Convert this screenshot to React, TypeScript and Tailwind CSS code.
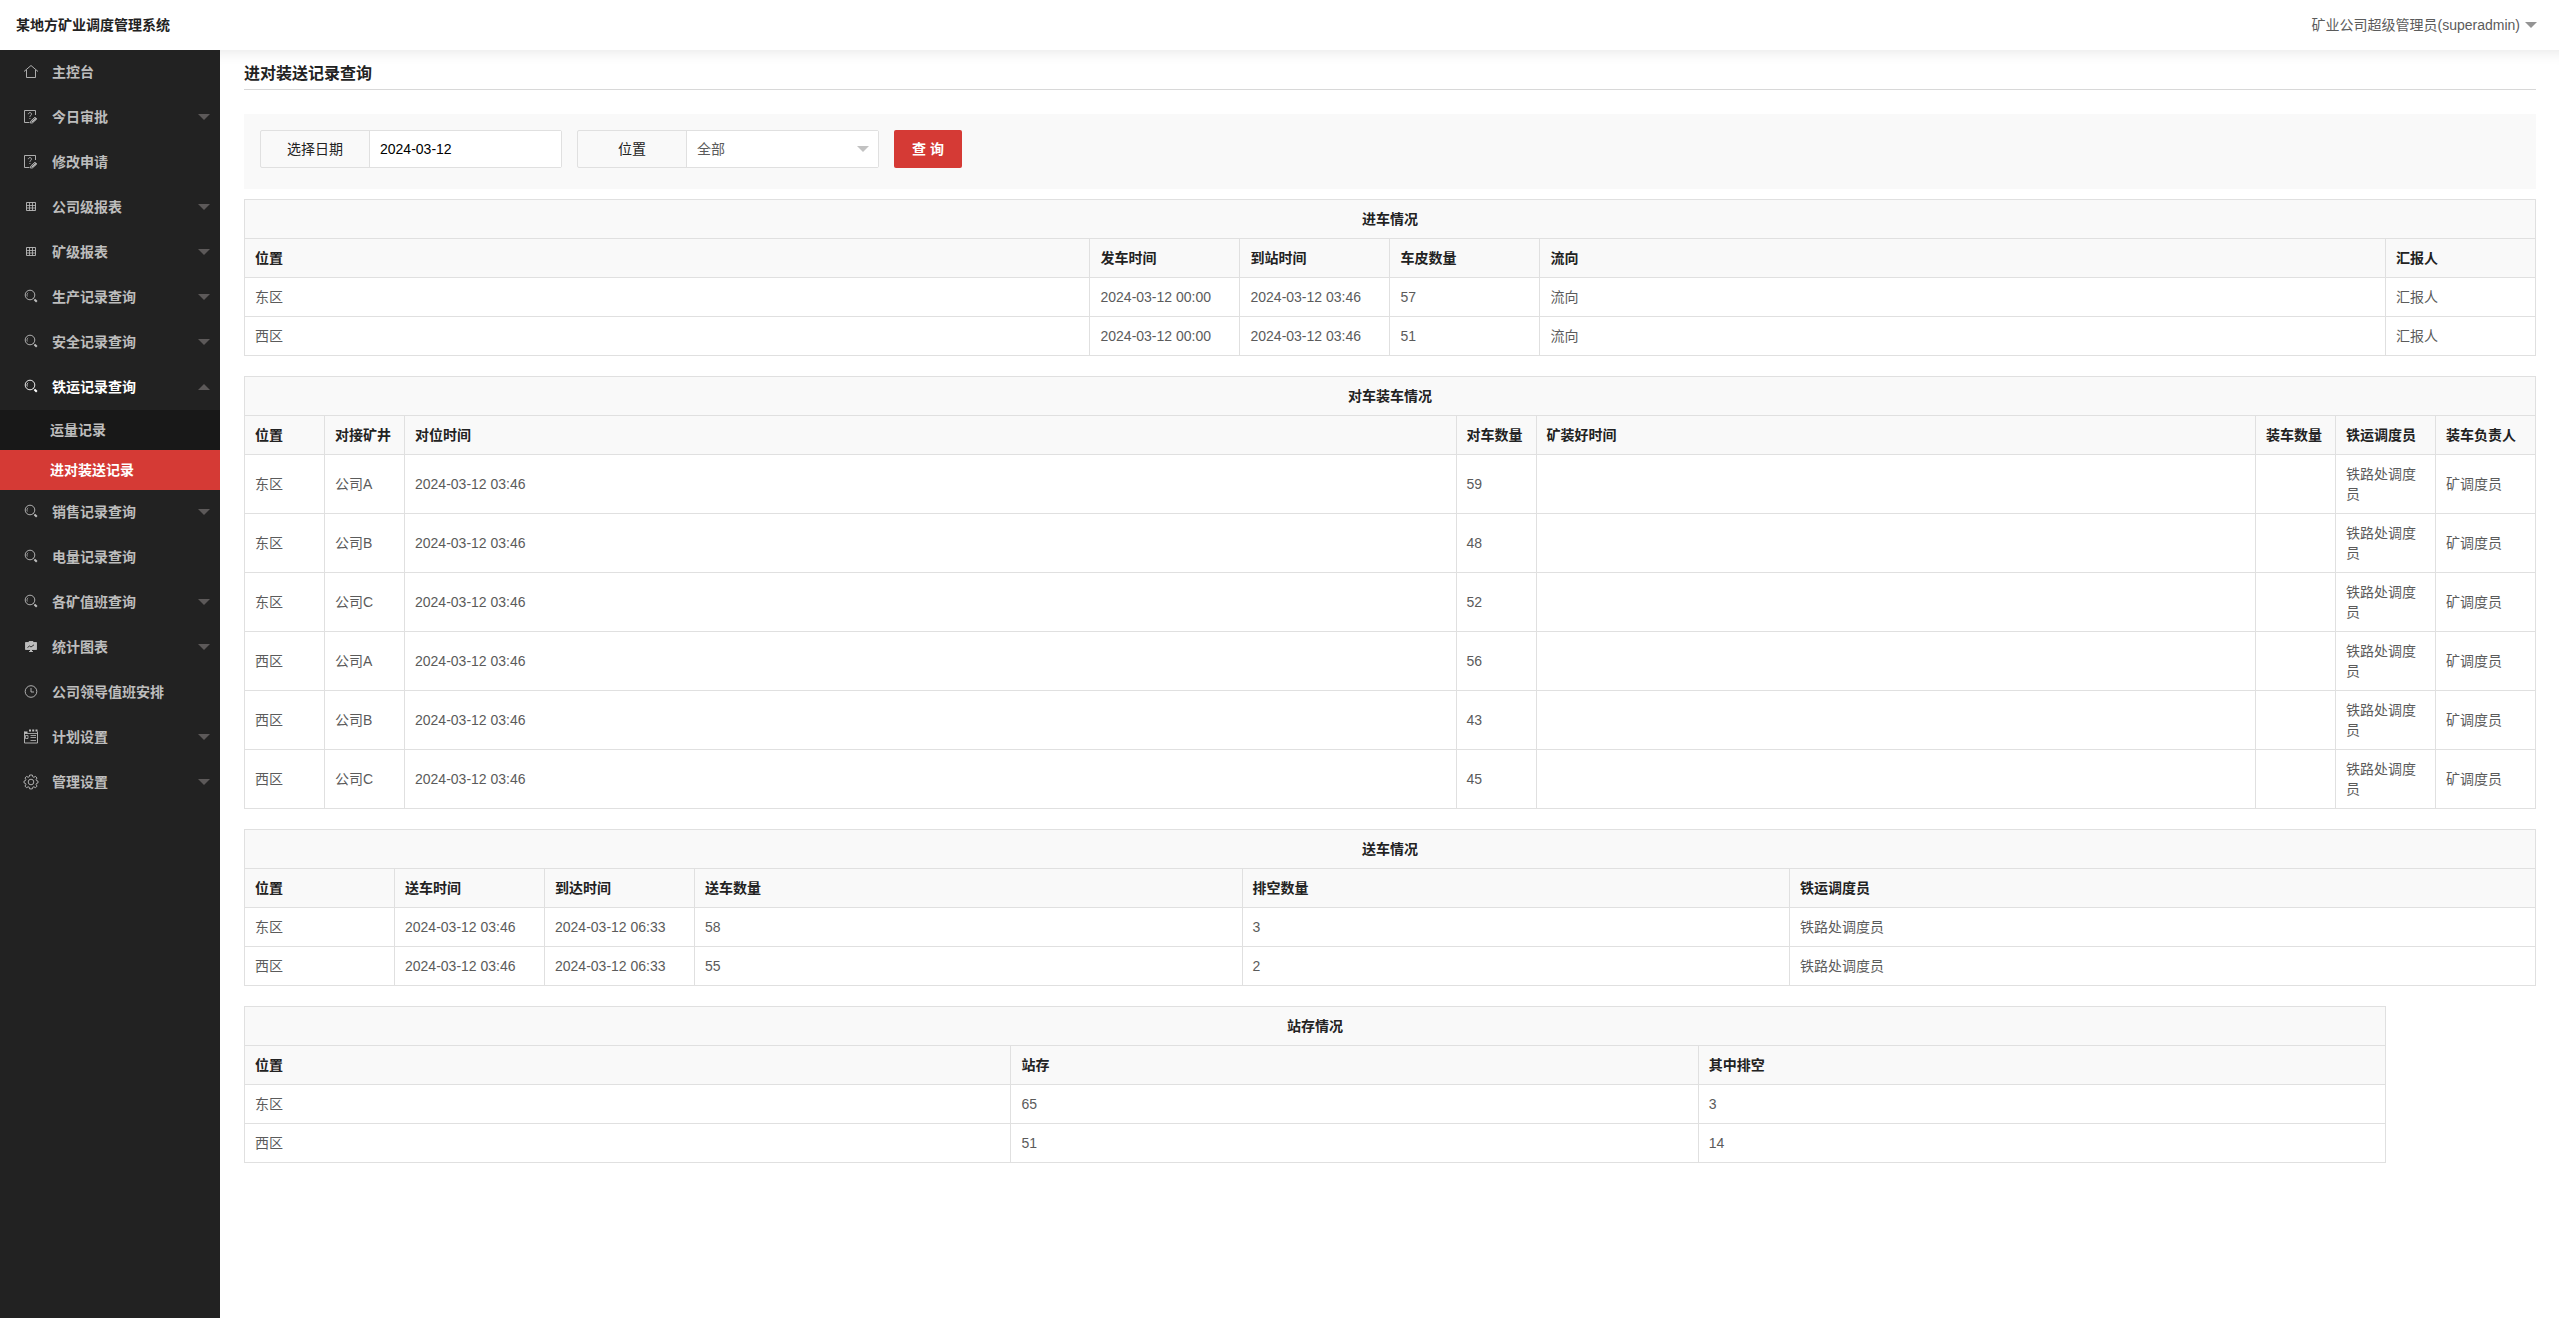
import type { ReactNode } from 'react';

type IconName = 'home' | 'survey' | 'grid' | 'search' | 'board' | 'clock' | 'form' | 'gear';

type NavItem = {
  label: string;
  icon: IconName;
  arrow?: boolean;
  children?: { label: string; active?: boolean }[];
};

const NAV: NavItem[] = [
  { label: '主控台', icon: 'home' },
  { label: '今日审批', icon: 'survey', arrow: true },
  { label: '修改申请', icon: 'survey' },
  { label: '公司级报表', icon: 'grid', arrow: true },
  { label: '矿级报表', icon: 'grid', arrow: true },
  { label: '生产记录查询', icon: 'search', arrow: true },
  { label: '安全记录查询', icon: 'search', arrow: true },
  {
    label: '铁运记录查询',
    icon: 'search',
    arrow: true,
    children: [{ label: '运量记录' }, { label: '进对装送记录', active: true }],
  },
  { label: '销售记录查询', icon: 'search', arrow: true },
  { label: '电量记录查询', icon: 'search' },
  { label: '各矿值班查询', icon: 'search', arrow: true },
  { label: '统计图表', icon: 'board', arrow: true },
  { label: '公司领导值班安排', icon: 'clock' },
  { label: '计划设置', icon: 'form', arrow: true },
  { label: '管理设置', icon: 'gear', arrow: true },
];

const ICONS: Record<IconName, ReactNode> = {
  home: (
    <>
      <path d="m1 7.5 7-6 7 6" />
      <path d="M3.500 6v7.500h9V6" />
    </>
  ),
  survey: (
    <>
      <path d="M6.500 13.500h-5v-12h11v4.500" />
      <path d="M5.300 5.200c0-2.200 3.400-2 3.200 0-.1 1.200-1.600 1.300-1.600 2.700M6.900 9v1" />
      <path d="m7.800 12 4.200-3.800 1.800 1.800-4.200 3.800-2 .3z" />
      <path d="m9 13 4-3.600" strokeWidth="1.5" />
    </>
  ),
  grid: (
    <>
      <path d="M3.500 3.500h9v8h-9z" />
      <path d="M3.500 6.500h9M3.500 9h9M6.500 3.500v8M9.500 3.500v8" strokeWidth="0.8" />
    </>
  ),
  search: (
    <>
      <circle cx="7" cy="6" r="4.800" />
      <path d="M4.300 7.500c-.6-1.500-.2-2.900.9-3.700" strokeWidth="0.8" />
      <path d="m10.400 9.400 1 1" />
      <path d="m11.500 10.500 2.300 2.300" strokeWidth="2" />
    </>
  ),
  board: (
    <>
      <path d="M2.500 3.500h11v7h-11zM6 2.500h4v1H6zM7.500 11h1v1.500h-1z" fill="currentColor" />
      <path d="M6 12.500h4" />
      <path d="m4.500 8.500 2-1.500 1.500 1 3-2.200" stroke="#222222" />
    </>
  ),
  clock: (
    <>
      <circle cx="8" cy="7.500" r="5.800" />
      <path d="M8 4v4h3" />
    </>
  ),
  form: (
    <>
      <path d="M1.500 2.500v11.500h13V2.500" />
      <path d="M1.500 3.500h3M6 1.500h2M9.200 1.500h2M12.500 1.500h2" strokeWidth="2" />
      <path d="M1.500 4.500h13M7.500 6.500h5.500M7.500 8.500h5.500M7.500 11.500h5.500M2.500 6.500h2.500v3H2.500z" strokeWidth="0.8" />
    </>
  ),
  gear: (
    <>
      <path d="M6.700 1h2.600l.5 1.800 1 .5 1.700-.9 1.500 1.600-.9 1.600.4 1 1.500.5v1.800l-1.500.5-.4 1.100.9 1.600-1.500 1.600-1.700-.9-1 .4-.5 1.700H6.700l-.5-1.700-1-.4-1.700.9L2 12.100l.9-1.600-.4-1.100L1 8.900V7.100l1.500-.5.4-1L2 4l1.500-1.600 1.700.9 1-.5z" />
      <circle cx="8" cy="8" r="2.800" />
    </>
  ),
};

function NavIcon({ name }: { name: IconName }) {
  return (
    <svg
      viewBox="0 0 16 16"
      className="size-4 shrink-0"
      fill="none"
      stroke="currentColor"
      strokeWidth="0.9"
      aria-hidden="true"
    >
      {ICONS[name]}
    </svg>
  );
}

function Triangle({ className = '' }: { className?: string }) {
  return (
    <svg viewBox="0 0 12 6" className={`h-[6px] w-[12px] shrink-0 ${className}`} fill="currentColor" aria-hidden="true">
      <path d="M0 0h12L6 6z" />
    </svg>
  );
}

function Sidebar() {
  return (
    <nav className="w-[220px] shrink-0 bg-[#222222] text-sm font-bold text-[#bdbdbd]">
      <ul>
        {NAV.map((item) => (
          <li key={item.label}>
            <a
              href="#"
              className={`flex h-[45px] items-center pr-[10px] pb-[2px] pl-[23px] ${item.children ? 'text-white' : ''}`}
            >
              <NavIcon name={item.icon} />
              <span className="ml-[13px] flex-1">{item.label}</span>
              {item.arrow && <Triangle className={`text-[#5c5959] ${item.children ? 'rotate-180' : ''}`} />}
            </a>
            {item.children && (
              <ul className="bg-[#181818]">
                {item.children.map((child) => (
                  <li key={child.label}>
                    <a
                      href="#"
                      className={`flex h-10 items-center pl-[50px] ${child.active ? 'bg-[#d53a35] text-white' : ''}`}
                    >
                      {child.label}
                    </a>
                  </li>
                ))}
              </ul>
            )}
          </li>
        ))}
      </ul>
    </nav>
  );
}

type Column = { title: string; width?: string };

type ReportTableProps = {
  caption: string;
  columns: Column[];
  rows: string[][];
};

function ReportTable({ caption, columns, rows }: ReportTableProps) {
  return (
    <table className="w-full table-fixed border-collapse text-left text-[#5b5b5b] [&_td]:border [&_td]:border-[#e0e0e0] [&_td]:px-[10px] [&_td]:py-[9px] [&_th]:border [&_th]:border-[#e0e0e0] [&_th]:px-[10px] [&_th]:py-[9px]">
      <colgroup>
        {columns.map((col) => (
          <col key={col.title} className={col.width} />
        ))}
      </colgroup>
      <thead className="bg-[#f9f9f9] text-[#222222]">
        <tr>
          <th colSpan={columns.length} className="text-center font-bold">
            {caption}
          </th>
        </tr>
        <tr>
          {columns.map((col) => (
            <th key={col.title} scope="col" className="font-bold whitespace-nowrap">
              {col.title}
            </th>
          ))}
        </tr>
      </thead>
      <tbody>
        {rows.map((row, i) => (
          <tr key={i}>
            {row.map((cell, j) => (
              <td key={j}>{cell}</td>
            ))}
          </tr>
        ))}
      </tbody>
    </table>
  );
}

const ARRIVALS: ReportTableProps = {
  caption: '进车情况',
  columns: [
    { title: '位置' },
    { title: '发车时间', width: 'w-[150px]' },
    { title: '到站时间', width: 'w-[150px]' },
    { title: '车皮数量', width: 'w-[150px]' },
    { title: '流向' },
    { title: '汇报人', width: 'w-[150px]' },
  ],
  rows: [
    ['东区', '2024-03-12 00:00', '2024-03-12 03:46', '57', '流向', '汇报人'],
    ['西区', '2024-03-12 00:00', '2024-03-12 03:46', '51', '流向', '汇报人'],
  ],
};

const loadingRow = (area: string, mine: string, count: string) => [
  area,
  mine,
  '2024-03-12 03:46',
  count,
  '',
  '',
  '铁路处调度员',
  '矿调度员',
];

const LOADING: ReportTableProps = {
  caption: '对车装车情况',
  columns: [
    { title: '位置', width: 'w-[80px]' },
    { title: '对接矿井', width: 'w-[80px]' },
    { title: '对位时间', width: 'w-[45.9%]' },
    { title: '对车数量', width: 'w-[80px]' },
    { title: '矿装好时间' },
    { title: '装车数量', width: 'w-[80px]' },
    { title: '铁运调度员', width: 'w-[100px]' },
    { title: '装车负责人', width: 'w-[100px]' },
  ],
  rows: [
    loadingRow('东区', '公司A', '59'),
    loadingRow('东区', '公司B', '48'),
    loadingRow('东区', '公司C', '52'),
    loadingRow('西区', '公司A', '56'),
    loadingRow('西区', '公司B', '43'),
    loadingRow('西区', '公司C', '45'),
  ],
};

const DEPARTURES: ReportTableProps = {
  caption: '送车情况',
  columns: [
    { title: '位置', width: 'w-[150px]' },
    { title: '送车时间', width: 'w-[150px]' },
    { title: '到达时间', width: 'w-[150px]' },
    { title: '送车数量', width: 'w-[23.9%]' },
    { title: '排空数量', width: 'w-[23.9%]' },
    { title: '铁运调度员' },
  ],
  rows: [
    ['东区', '2024-03-12 03:46', '2024-03-12 06:33', '58', '3', '铁路处调度员'],
    ['西区', '2024-03-12 03:46', '2024-03-12 06:33', '55', '2', '铁路处调度员'],
  ],
};

const STOCK: ReportTableProps = {
  caption: '站存情况',
  columns: [{ title: '位置', width: 'w-[35.8%]' }, { title: '站存' }, { title: '其中排空' }],
  rows: [
    ['东区', '65', '3'],
    ['西区', '51', '14'],
  ],
};

export default function App() {
  return (
    <div className="flex min-h-screen flex-col bg-white font-['Liberation_Sans','Noto_Sans_CJK_SC',sans-serif] text-sm text-[#222222]">
      <header className="relative z-10 flex h-[50px] items-center justify-between bg-white pr-[22px] pl-4">
        <div className="font-bold">某地方矿业调度管理系统</div>
        <button type="button" className="flex items-center gap-[5px] text-[#5b5b5b]">
          矿业公司超级管理员(superadmin)
          <Triangle className="text-[#949494]" />
        </button>
      </header>

      <div className="flex flex-1">
        <Sidebar />

        <main className="min-w-0 flex-1 pt-3 pr-[23px] pl-6 shadow-[inset_0_16px_16px_-16px_rgba(0,0,0,0.12)]">
          <h1 className="border-b border-[#d8d8d8] pb-[3px] text-base font-bold">进对装送记录查询</h1>

          <form className="mt-6 flex gap-[15px] bg-[#f9f9f9] px-4 pt-4 pb-[21px]">
            <div className="flex h-[38px] w-[302px] rounded-xs border border-[#e0e0e0]">
              <label
                htmlFor="date"
                className="flex w-[109px] items-center justify-center border-r border-[#e0e0e0]"
              >
                选择日期
              </label>
              <input
                id="date"
                type="text"
                defaultValue="2024-03-12"
                className="min-w-0 flex-1 bg-white px-[10px] text-black outline-none"
              />
            </div>
            <div className="flex h-[38px] w-[302px] rounded-xs border border-[#e0e0e0]">
              <label
                htmlFor="area"
                className="flex w-[109px] items-center justify-center border-r border-[#e0e0e0]"
              >
                位置
              </label>
              <div className="relative flex-1 bg-white">
                <select
                  id="area"
                  className="h-full w-full appearance-none bg-transparent px-[10px] text-[#5b5b5b] outline-none"
                >
                  <option>全部</option>
                  <option>东区</option>
                  <option>西区</option>
                </select>
                <Triangle className="pointer-events-none absolute top-[15px] right-[9px] text-[#c2c2c2]" />
              </div>
            </div>
            <button type="button" className="h-[38px] w-[68px] rounded-xs bg-[#d53a35] font-bold text-white">
              查 询
            </button>
          </form>

          <div className="mt-[10px] flex flex-col gap-5 pb-6">
            <ReportTable {...ARRIVALS} />
            <ReportTable {...LOADING} />
            <ReportTable {...DEPARTURES} />
            <div className="pr-[150px]">
              <ReportTable {...STOCK} />
            </div>
          </div>
        </main>
      </div>
    </div>
  );
}
